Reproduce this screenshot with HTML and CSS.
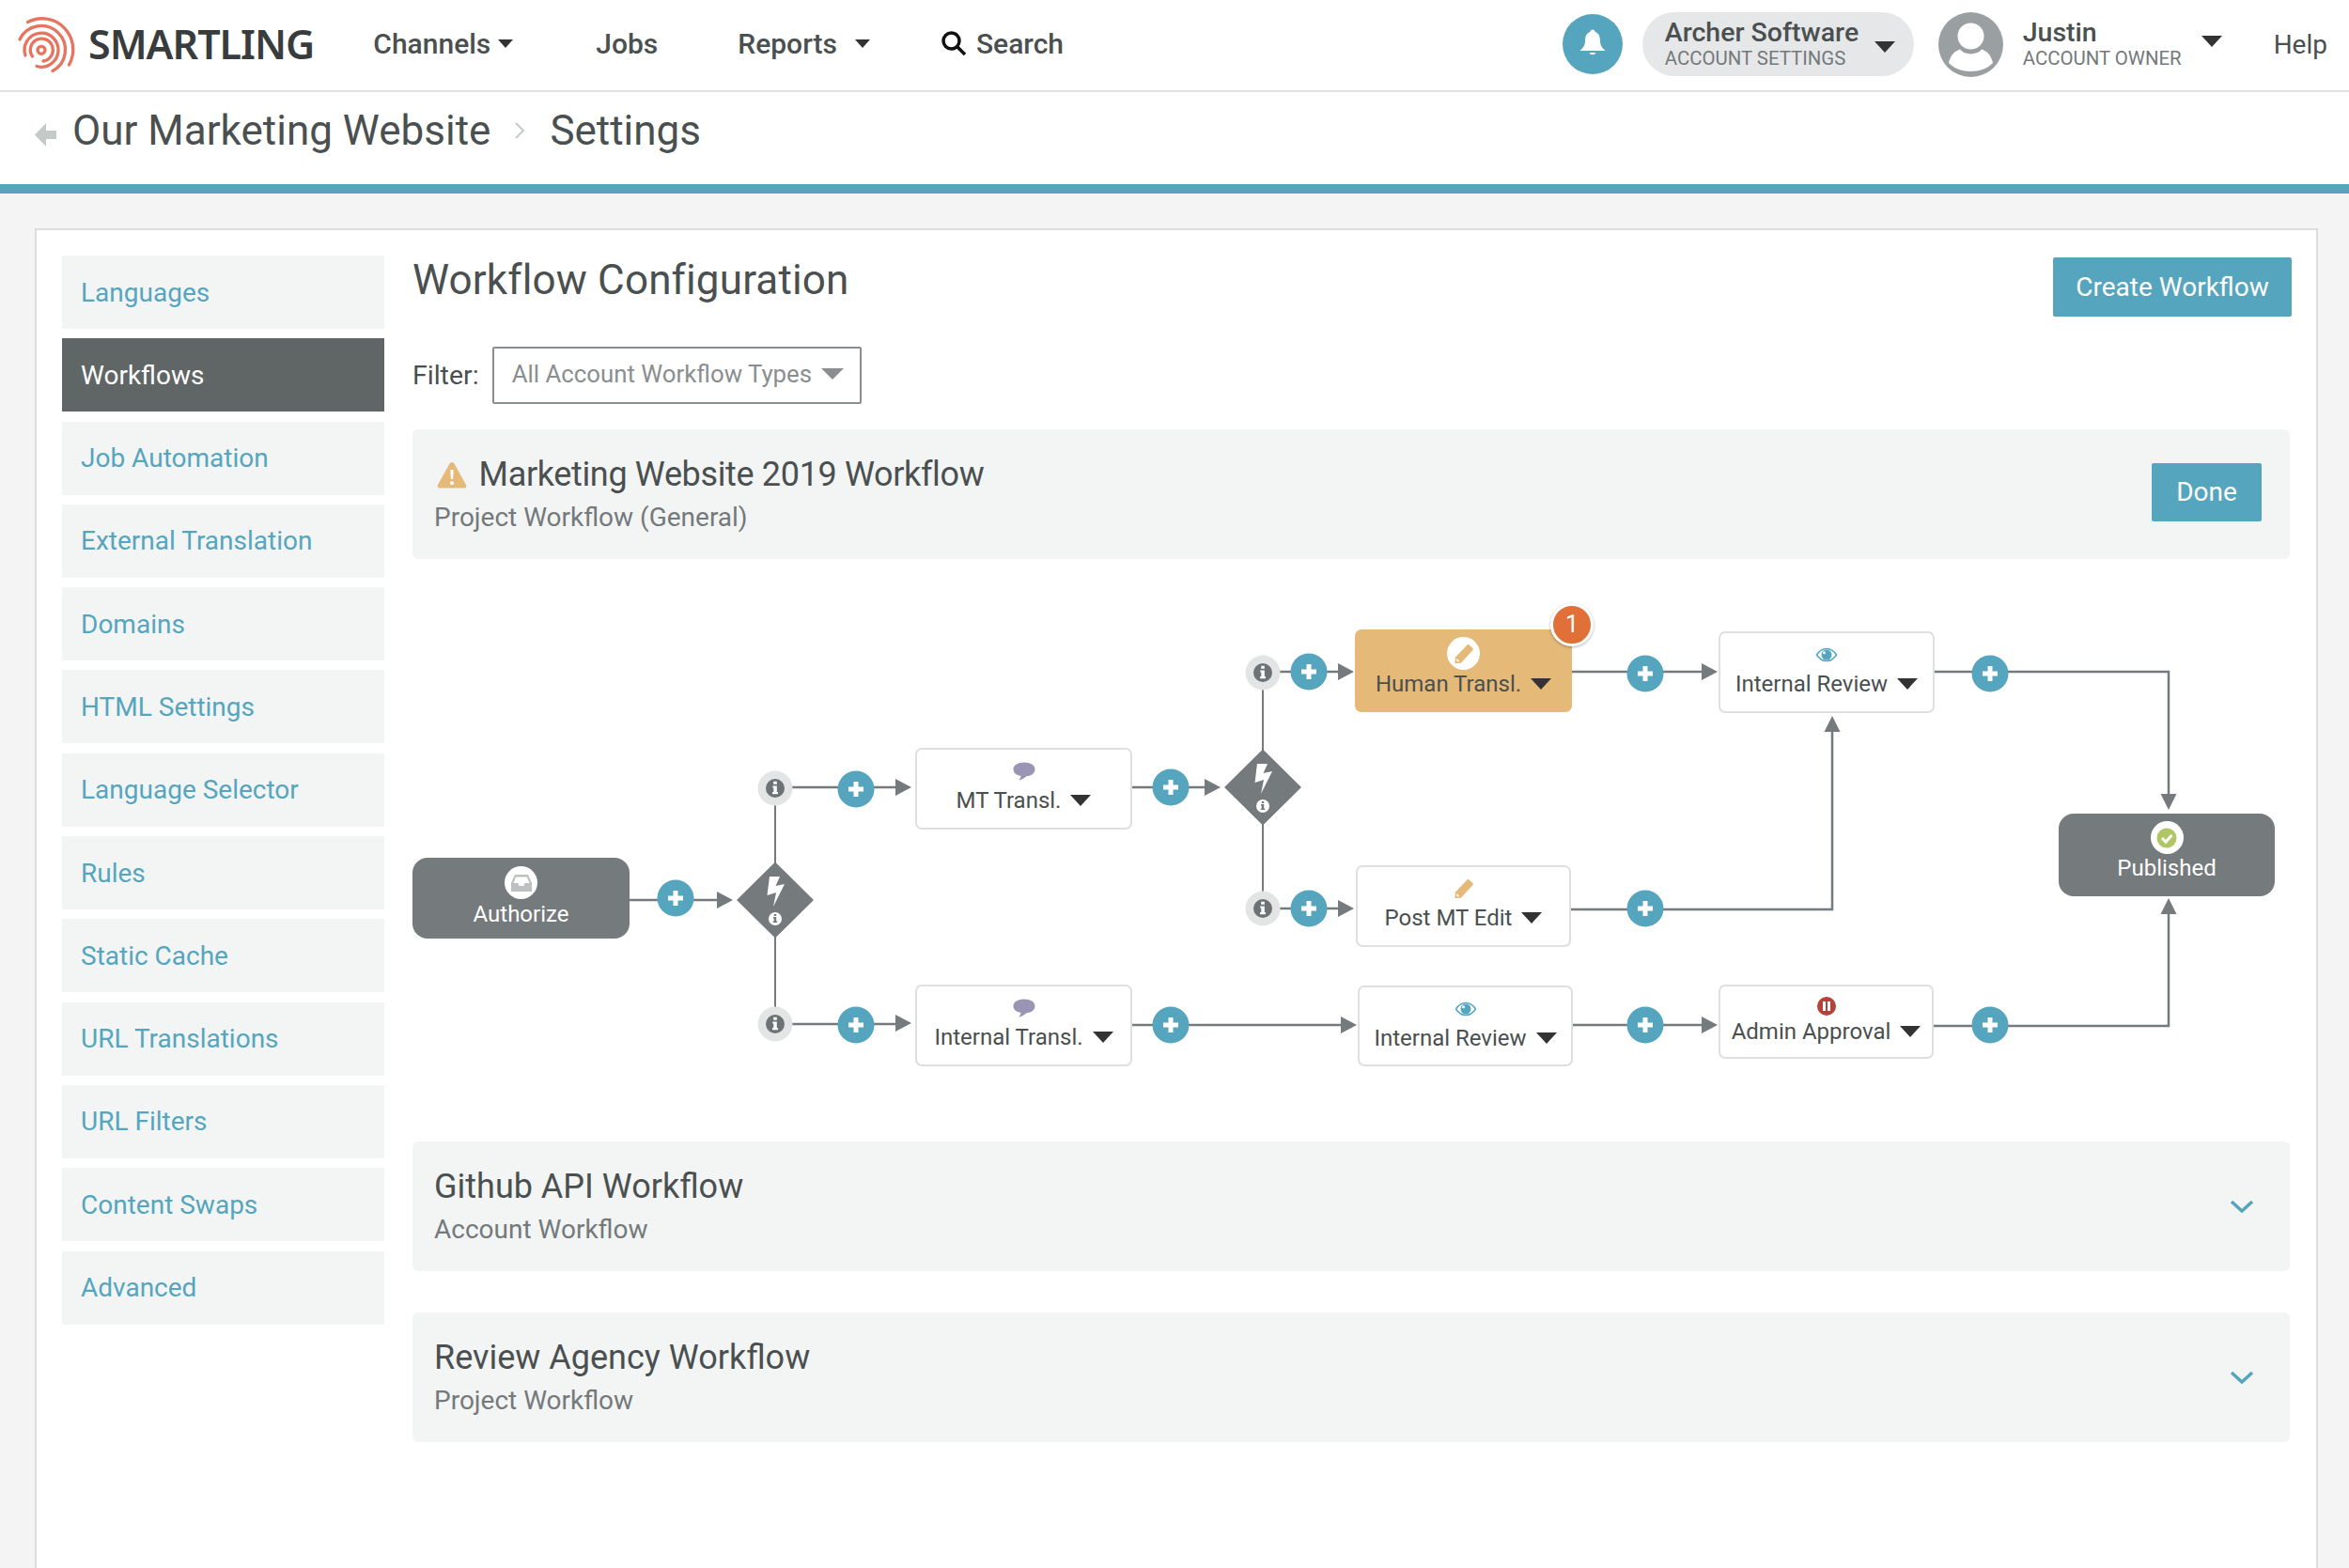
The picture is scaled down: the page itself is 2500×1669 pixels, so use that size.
FILE: index.html
```html
<!DOCTYPE html>
<html lang="en">
<head>
<meta charset="UTF-8" />
<title>Workflow Configuration</title>
<link rel="stylesheet" href="styles.css">
</head>
<body>
<svg class="defs" width="0" height="0" aria-hidden="true">
  <defs>
    <symbol id="plus" viewBox="0 0 40 40" overflow="visible">
      <circle cx="20" cy="20" r="19.500" fill="#56a5be" stroke="none"/>
      <path d="M20 12v16M12 20h16" stroke="#fff" stroke-width="5"/>
    </symbol>
    <symbol id="info" viewBox="0 0 38 38">
      <circle cx="19" cy="19" r="18.500" fill="#e3e5e5" stroke="none"/>
      <circle cx="19" cy="19" r="10" fill="#6d7274" stroke="none"/>
      <path d="M17.200 11.800h3.600v3h-3.600zM16.300 16.400h4.500v6.600h1.200v2.200h-6v-2.200h1.300v-4.400h-1z" fill="#fff" stroke="none"/>
    </symbol>
    <symbol id="pencil" viewBox="0 0 24 24">
      <path d="M2 16 15.500 1.800c.8-.8 1.800-.8 2.600-.1l3.900 3.500c.8.700.8 1.800.1 2.600L8.500 22.500 1.500 23z" fill="#e5b977"/>
      <path d="M3.500 18.500l2.500 2.300" stroke="#fff" stroke-width="1.800"/>
    </symbol>
    <symbol id="eye" viewBox="0 0 24 16">
      <path d="M1.500 8C4.500 3.500 8 1.500 12 1.500S19.500 3.500 22.500 8C19.500 12.500 16 14.500 12 14.500S4.500 12.500 1.500 8z" fill="none" stroke="#56a5be" stroke-width="1.500"/>
      <circle cx="12" cy="8" r="5.500" fill="#56a5be"/>
      <circle cx="9.500" cy="5.800" r="1.500" fill="#fff"/>
    </symbol>
    <symbol id="bubble" viewBox="0 0 24 20">
      <path d="M12 .5c6.500 0 11.500 2.800 11.500 7.500 0 4.200-4 7-9 7.300C12 17.500 9.500 19 6 19.500c1.500-1.300 2.300-2.800 2.500-4.500C3.800 14.200.5 11.800.500 8 .5 3.300 5.500.5 12 .5z" fill="#9a95b5"/>
    </symbol>
  </defs>
</svg>

<header class="topbar">
  <a class="logo">
    <svg width="80" height="76" viewBox="0 0 80 76" fill="none" stroke="#e7745f" stroke-width="3.300" stroke-linecap="round">
      <circle cx="34" cy="43.300" r="4"/>
      <path d="M24.500 50A12 12 0 1 1 36 55"/>
      <path d="M17 49A18 18 0 1 1 29 60.500"/>
      <path d="M11 32A25.500 25.500 0 1 1 46 65.500"/>
      <path d="M19.500 13.500A33 33 0 0 1 63.500 59"/>
    </svg>
    <span class="logo-text">SMARTLING</span>
  </a>
  <nav class="nav">
    <a class="nav-item nav-channels">Channels<i class="caret caret-sm"></i></a>
    <a class="nav-item nav-jobs">Jobs</a>
    <a class="nav-item nav-reports">Reports<i class="caret caret-sm"></i></a>
    <a class="nav-item nav-search">
      <svg width="28" height="28" viewBox="0 0 28 28" fill="none" stroke="#111" stroke-width="3.500"><circle cx="11.500" cy="11.500" r="8.500"/><path d="M18 18l8 8"/></svg>
      Search
    </a>
  </nav>
  <div class="account">
    <span class="bell">
      <svg width="64" height="64" viewBox="0 0 64 64"><path d="M32 16.500c-1.500 0-2.500 1-2.500 2.300C25 20.500 24 24.500 24 29c0 4-2 7-5.500 10h27C42 36 40 33 40 29c0-4.500-1-8.500-5.500-10.200 0-1.300-1-2.300-2.500-2.300z" fill="#fff"/><path d="M28.500 41a3.800 3.800 0 0 0 7 0z" fill="#fff"/></svg>
    </span>
    <a class="org">
      <span class="who">
        <b>Archer Software</b>
        <small>ACCOUNT SETTINGS</small>
      </span>
      <i class="caret"></i>
    </a>
    <svg class="avatar" width="69" height="69" viewBox="0 0 69 69">
      <circle cx="34.500" cy="34.500" r="34.500" fill="#9aa0a1"/>
      <circle cx="34.500" cy="25.500" r="14" fill="#fff"/>
      <path d="M11 54C13 45 18 41 23 39.500 28 46 41 46 46 39.500 51 41 56 45 58 54 47 66 22 66 11 54z" fill="#fff"/>
    </svg>
    <a class="user">
      <span class="who">
        <b>Justin</b>
        <small>ACCOUNT OWNER</small>
      </span>
      <i class="caret"></i>
    </a>
    <a class="help">Help</a>
  </div>
</header>

<div class="crumbs">
  <svg class="crumb-back" width="23" height="25" viewBox="0 0 23 25"><path d="M12 0 0 12.500 12 25v-8h11V8H12z" fill="#c5c9ca"/></svg>
  <a>Our Marketing Website</a>
  <svg class="crumb-sep" width="13" height="20" viewBox="0 0 13 20" fill="none" stroke="#c5c9ca" stroke-width="2"><path d="M2 2l8 8-8 8"/></svg>
  <a>Settings</a>
</div>

<div class="panel">
  <aside class="side">
    <a class="side-item">Languages</a>
    <a class="side-item active">Workflows</a>
    <a class="side-item">Job Automation</a>
    <a class="side-item">External Translation</a>
    <a class="side-item">Domains</a>
    <a class="side-item">HTML Settings</a>
    <a class="side-item">Language Selector</a>
    <a class="side-item">Rules</a>
    <a class="side-item">Static Cache</a>
    <a class="side-item">URL Translations</a>
    <a class="side-item">URL Filters</a>
    <a class="side-item">Content Swaps</a>
    <a class="side-item">Advanced</a>
  </aside>

  <main class="main">
    <div class="title-row">
      <h1>Workflow Configuration</h1>
      <button class="btn btn-create">Create Workflow</button>
    </div>
    <div class="filter-row">
      <label>Filter:</label>
      <div class="select">All Account Workflow Types<i class="caret caret-gray"></i></div>
    </div>

    <section class="wf-card wf-open">
      <div class="wf-text">
        <h2>
          <svg class="warn" width="32" height="29" viewBox="0 0 32 29"><path d="M16 1c1.200 0 2 .7 2.600 1.800L31 25c1 2-.2 3.500-2 3.500H3C1.200 28.500 0 27 1 25L13.400 2.800C14 1.700 14.800 1 16 1z" fill="#e5b977"/><path d="M14.300 9h3.400l-.6 10h-2.200zM14.200 21.500h3.600v3.400h-3.600z" fill="#fff"/></svg>
          Marketing Website 2019 Workflow
        </h2>
        <p>Project Workflow (General)</p>
      </div>
      <button class="btn btn-done">Done</button>
    </section>

    <div class="diagram">
      <svg class="wires" width="1998" height="620" viewBox="0 0 1998 620" fill="none" stroke="#757a7c" stroke-width="2.500">
        <!-- connectors -->
        <path d="M231 363H325"/>
        <path d="M386 243V495" stroke-width="2"/>
        <path d="M386 243H515M386 495H515"/>
        <path d="M765 243H844M765 496H989"/>
        <path d="M905 120V372" stroke-width="2"/>
        <path d="M905 120H986M905 372H986"/>
        <path d="M1234 120H1373M1235 496H1373"/>
        <path d="M1233 373H1511V182"/>
        <path d="M1620 120H1869V252"/>
        <path d="M1619 497H1869V376"/>
        <g fill="#757a7c" stroke="none">
          <path d="M324 354l17 9-17 9zM514 234l17 9-17 9zM514 485l17 9-17 9zM843 234l17 9-17 9zM988 487l17 9-17 9zM985 111l17 9-17 9zM985 363l17 9-17 9zM1372 111l17 9-17 9zM1372 487l17 9-17 9z"/>
          <path d="M1511 167l8.500 17h-17zM1869 267l-8.500-17h17zM1869 361l8.500 17h-17z"/>
          <path d="M386 322.500 427 363 386 403.500 345 363zM905 202.500 946 243 905 283.500 864 243z"/>
        </g>
        <g fill="#fff" stroke="none">
          <path d="M380 338h11l-4.500 10 9.500-2-12 24 3-15-9.500 3zM899 218h11l-4.500 10 9.500-2-12 24 3-15-9.500 3z"/>
          <circle cx="386" cy="383" r="7"/><circle cx="905" cy="263" r="7"/>
        </g>
        <path d="M384.800 378h2.400v2h-2.400zM384 381h3.200v4.500h1v1.500h-4.500v-1.500h1v-3h-.7zM903.800 258h2.400v2h-2.400zM903 261h3.200v4.500h1v1.500h-4.500v-1.500h1v-3h-.7z" fill="#757a7c" stroke="none"/>
        <!-- info dots -->
        <use href="#info" x="367" y="225" width="38" height="38"/>
        <use href="#info" x="367" y="476" width="38" height="38"/>
        <use href="#info" x="886" y="102" width="38" height="38"/>
        <use href="#info" x="886" y="353" width="38" height="38"/>
        <!-- add step buttons -->
        <use href="#plus" x="260" y="341" width="40" height="40"/>
        <use href="#plus" x="452" y="225" width="40" height="40"/>
        <use href="#plus" x="452" y="476" width="40" height="40"/>
        <use href="#plus" x="787" y="223" width="40" height="40"/>
        <use href="#plus" x="787" y="476" width="40" height="40"/>
        <use href="#plus" x="934" y="100" width="40" height="40"/>
        <use href="#plus" x="934" y="352" width="40" height="40"/>
        <use href="#plus" x="1292" y="102" width="40" height="40"/>
        <use href="#plus" x="1292" y="352" width="40" height="40"/>
        <use href="#plus" x="1292" y="476" width="40" height="40"/>
        <use href="#plus" x="1659" y="102" width="40" height="40"/>
        <use href="#plus" x="1659" y="476" width="40" height="40"/>
      </svg>

      <div class="node node-dark n-authorize">
        <span class="node-badge"><svg width="24" height="20" viewBox="0 0 24 20"><path d="M5 1h14l4 9v9H1v-9z" fill="#bcc0c1"/><path d="M6 3.500h12l2.500 6.500h-5l-1 3h-5l-1-3h-5z" fill="#fff"/></svg></span>
        <span class="node-label">Authorize</span>
      </div>
      <div class="node n-mt">
        <span class="node-icon"><svg width="24" height="20"><use href="#bubble"/></svg></span>
        <span class="node-label">MT Transl.<i class="caret"></i></span>
      </div>
      <div class="node n-internal-transl">
        <span class="node-icon"><svg width="24" height="20"><use href="#bubble"/></svg></span>
        <span class="node-label">Internal Transl.<i class="caret"></i></span>
      </div>
      <div class="node node-warn n-human">
        <span class="node-badge"><svg width="22" height="22"><use href="#pencil"/></svg></span>
        <span class="node-label">Human Transl.<i class="caret"></i></span>
        <span class="count">1</span>
      </div>
      <div class="node n-post">
        <span class="node-icon"><svg width="22" height="22"><use href="#pencil"/></svg></span>
        <span class="node-label">Post MT Edit<i class="caret"></i></span>
      </div>
      <div class="node n-review-top">
        <span class="node-icon"><svg width="24" height="16"><use href="#eye"/></svg></span>
        <span class="node-label">Internal Review<i class="caret"></i></span>
      </div>
      <div class="node n-review-low">
        <span class="node-icon"><svg width="24" height="16"><use href="#eye"/></svg></span>
        <span class="node-label">Internal Review<i class="caret"></i></span>
      </div>
      <div class="node n-admin">
        <span class="node-icon"><svg width="20" height="20" viewBox="0 0 20 20"><circle cx="10" cy="10" r="10" fill="#b4443a"/><path d="M6 5h3v10H6zM11 5h3v10h-3z" fill="#fff"/></svg></span>
        <span class="node-label">Admin Approval<i class="caret"></i></span>
      </div>
      <div class="node node-dark n-published">
        <span class="node-badge"><svg width="22" height="22" viewBox="0 0 22 22"><circle cx="11" cy="11" r="10.500" fill="#afc665"/><path d="M6 11l4 4 6.500-7" fill="none" stroke="#fff" stroke-width="3"/></svg></span>
        <span class="node-label">Published</span>
      </div>
    </div>

    <section class="wf-card">
      <div class="wf-text">
        <h2>Github API Workflow</h2>
        <p>Account Workflow</p>
      </div>
      <svg class="chev" width="26" height="14" viewBox="0 0 26 14" fill="none" stroke="#56a5be" stroke-width="3.500"><path d="M2 2l11 10L24 2"/></svg>
    </section>
    <section class="wf-card wf-last">
      <div class="wf-text">
        <h2>Review Agency Workflow</h2>
        <p>Project Workflow</p>
      </div>
      <svg class="chev" width="26" height="14" viewBox="0 0 26 14" fill="none" stroke="#56a5be" stroke-width="3.500"><path d="M2 2l11 10L24 2"/></svg>
    </section>
  </main>
</div>
</body>
</html>
```

FILE: styles.css
```css
:root {
  --teal: #56a5be;
  --text: #4a4f50;
  --muted: #74797b;
  --dark: #757a7c;
  --amber: #e5b977;
  --tile: #f3f5f5;
}
* {
  box-sizing: border-box;
}
html, body {
  height: 1669px;
  overflow: hidden;
}
body {
  margin: 0;
  background: #f4f4f4;
  font-family: Roboto, "Noto Sans", sans-serif;
  color: var(--text);
}
.defs {
  position: absolute;
}
h1, h2, p {
  margin: 0;
  font-weight: 400;
}

/* top bar */
.topbar {
  display: flex;
  align-items: center;
  height: 98px;
  padding: 0 23px 2px 10px;
  background: #fff;
  border-bottom: 2px solid #e0e1e1;
}
.logo {
  display: flex;
  align-items: center;
}
.logo svg {
  margin-top: 1px;
}
.logo-text {
  margin-left: 4px;
  font-family: "Noto Sans", sans-serif;
  font-size: 43px;
  font-weight: 600;
  line-height: 50px;
  color: #383c3d;
  letter-spacing: -1px;
}
.nav {
  display: flex;
  align-items: center;
  margin: -2px 0 0 63px;
  font-size: 30px;
  font-weight: 500;
}
.nav-item {
  display: flex;
  align-items: center;
}
.nav-jobs {
  margin-left: 88px;
}
.nav-reports {
  margin-left: 85px;
}
.nav-search {
  margin-left: 75px;
  gap: 10px;
}
.caret {
  display: inline-block;
  width: 0;
  height: 0;
  margin-left: 10px;
  border-style: solid;
  border-width: 12px 11px 0;
  border-color: #333 transparent transparent;
}
.caret-sm {
  margin-left: 8px;
  border-width: 9px 8px 0;
}
.nav-reports .caret {
  margin-left: 19px;
}
.caret-gray {
  border-width: 12px 12px 0;
  border-top-color: #8a8e90;
}
.account {
  display: flex;
  align-items: center;
  margin-left: auto;
}
.bell {
  display: block;
  width: 64px;
  height: 64px;
  border-radius: 50%;
  background: var(--teal);
}
.org {
  display: flex;
  align-items: center;
  width: 289px;
  height: 68px;
  margin-left: 21px;
  padding-left: 24px;
  border-radius: 34px;
  background: #e6e7e8;
}
.who {
  display: flex;
  flex-direction: column;
}
.who b {
  font-size: 28.500px;
  line-height: 30px;
  font-weight: 500;
}
.who small {
  font-size: 20.400px;
  line-height: 24px;
  color: var(--muted);
}
.org .caret {
  margin-left: 17px;
  margin-top: 6px;
}
.avatar {
  margin-left: 26px;
}
.user {
  display: flex;
  align-items: center;
  margin-left: 21px;
}
.user .caret {
  margin-left: 21px;
  margin-top: -6px;
}
.help {
  margin-left: 55px;
  font-size: 28px;
}

/* breadcrumb */
.crumbs {
  display: flex;
  align-items: center;
  height: 108px;
  padding: 0 0 16px 37px;
  background: #fff;
  border-bottom: 10px solid var(--teal);
  font-size: 44px;
}
.crumb-back {
  margin: 8px 17px 0 0;
}
.crumb-sep {
  margin: 0 25px;
}

/* settings panel */
.panel {
  display: grid;
  grid-template-columns: 343px 1998px;
  gap: 30px;
  width: 2430px;
  height: 1500px;
  margin: 37px 0 0 37px;
  padding: 27px 0 0 27px;
  border: 2px solid #dcdddd;
  background: #fff;
}
.side {
  display: flex;
  flex-direction: column;
  gap: 10.300px;
}
.side-item {
  display: flex;
  align-items: center;
  height: 78px;
  padding-left: 20px;
  background: var(--tile);
  color: var(--teal);
  font-size: 28px;
}
.side-item.active {
  background: #606565;
  color: #fff;
}

.title-row {
  display: flex;
  justify-content: space-between;
  align-items: flex-start;
  height: 97px;
}
h1 {
  margin-top: -2px;
  font-size: 44px;
  line-height: 56px;
  letter-spacing: 0.15px;
}
.btn {
  border: 0;
  border-radius: 2px;
  background: var(--teal);
  color: #fff;
  font-family: inherit;
  font-size: 28px;
}
.btn-create {
  width: 254px;
  height: 63px;
  margin-top: 2px;
  margin-right: -2px;
}
.filter-row {
  display: flex;
  align-items: center;
  gap: 14px;
  height: 61px;
  font-size: 28.500px;
}
.select {
  display: flex;
  align-items: center;
  justify-content: space-between;
  width: 393px;
  height: 61px;
  padding: 0 19px 4px;
  border: 2px solid #8a8e90;
  border-radius: 2px;
  color: #8a8e90;
  font-size: 25.800px;
  white-space: nowrap;
}
.wf-card {
  display: flex;
  align-items: center;
  justify-content: space-between;
  height: 138px;
  margin-top: 27px;
  padding: 0 27px 0 23px;
  border-radius: 6px;
  background: var(--tile);
}
.wf-text {
  padding-bottom: 2px;
}
.wf-card h2 {
  font-size: 36px;
  line-height: 46px;
}
.wf-open h2 {
  letter-spacing: -0.35px;
}
.wf-card p {
  margin-top: 5px;
  font-size: 28px;
  line-height: 36px;
  color: var(--muted);
}
.warn {
  margin: 0 4px 0 3px;
  vertical-align: -3px;
}
.btn-done {
  width: 117px;
  height: 62px;
  margin-top: -5px;
  margin-right: 3px;
}
.chev {
  margin-right: 11px;
}

/* diagram canvas, nodes are placed on it by coordinates */
.diagram {
  position: relative;
  height: 620px;
}
.diagram + .wf-card {
  margin-top: 0;
}
.wf-last {
  margin-top: 44px;
}
.wires {
  position: absolute;
  left: 0;
  top: 0;
}
.node {
  position: absolute;
  display: flex;
  flex-direction: column;
  align-items: center;
  padding-top: 5px;
  border: 2px solid #dedfdf;
  border-radius: 7px;
  background: #fff;
  font-size: 24px;
}
.node-icon, .node-badge {
  display: flex;
  align-items: center;
  justify-content: center;
  width: 35px;
  height: 35px;
  border-radius: 50%;
}
.node-badge {
  background: #fff;
}
.node-label {
  display: flex;
  align-items: center;
  margin-top: -1px;
  line-height: 30px;
  white-space: nowrap;
}
.node-dark {
  padding-top: 8px;
  border: 0;
  border-radius: 16px;
  background: var(--dark);
  color: #fff;
}
.node-dark .node-label, .node-warn .node-label {
  margin-top: 0;
}
.node-warn {
  padding-top: 8px;
  border: 0;
  background: var(--amber);
}
.count {
  position: absolute;
  right: -23px;
  top: -28px;
  width: 46px;
  height: 46px;
  border: 3px solid #fff;
  border-radius: 50%;
  background: #e07038;
  box-shadow: 0 1px 3px rgba(0, 0, 0, 0.3);
  color: #fff;
  font-size: 25px;
  line-height: 40px;
  text-align: center;
}
.n-authorize { left: 0; top: 318px; width: 231px; height: 86px; padding-top: 9px; }
.n-authorize .node-label { margin-top: 1px; }
.n-mt { left: 535px; top: 201px; width: 231px; height: 87px; }
.n-internal-transl { left: 535px; top: 453px; width: 231px; height: 87px; }
.n-human { left: 1003px; top: 75px; width: 231px; height: 88px; }
.n-post { left: 1004px; top: 326px; width: 229px; height: 87px; }
.n-review-low { left: 1006px; top: 454px; width: 229px; height: 86px; }
.n-review-top { left: 1390px; top: 77px; width: 230px; height: 87px; }
.n-admin { left: 1390px; top: 453px; width: 229px; height: 79px; padding-top: 3px; }
.n-admin .node-label { margin-top: -5px; }
.n-published { left: 1752px; top: 271px; width: 230px; height: 88px; }
```
